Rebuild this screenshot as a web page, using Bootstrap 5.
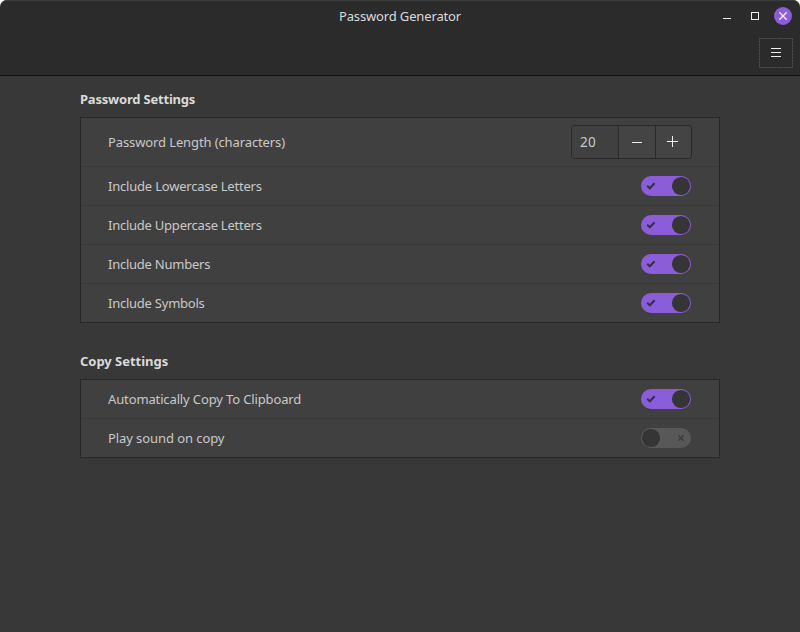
<!DOCTYPE html>
<html lang="en">
<head>
<meta charset="utf-8">
<meta name="viewport" content="width=device-width, initial-scale=1">
<title>Password Generator</title>
<link href="https://cdn.jsdelivr.net/npm/bootstrap@5.3.0/dist/css/bootstrap.min.css" rel="stylesheet">
<style>
  html { background: #fff; }
  body { background: #fff; font-family: "Noto Sans", sans-serif; font-size: 13px; line-height: 18px; color: #c9c9c9; }
  .app-window { height: 632px; background: #383838; border-radius: 7px 7px 0 0; overflow: hidden; }
  .app-header { height: 76px; background: #2b2b2b; border-bottom: 1px solid #101010; border-radius: 7px 7px 0 0; box-shadow: inset 0 1px #3c3c3c; }
  .title-row { height: 32px; }
  .title-text { color: #dadada; letter-spacing: -.14px; }
  .window-buttons { top: 7px; right: 8px; }
  .tool-row { padding: 6px 7px 0 0; }
  .icon-button { background: none; border: 0; padding: 0; line-height: 0; }
  .settings-main { width: 640px; padding-top: 14px; }
  .section-title { font-size: 13px; line-height: 18px; font-weight: 700; color: #dadada; margin-bottom: 9px; }
  .settings-list { --bs-list-group-bg: #404040; --bs-list-group-color: #c9c9c9; --bs-list-group-border-color: #272727; border: 1px solid #272727; border-radius: 0; margin-bottom: 29px; }
  .setting-row { height: 39px; padding: 0 28px 0 27px; border: 0; border-bottom: 1px solid #393939; }
  .setting-row:last-child { height: 38px; border-bottom: 0; }
  .setting-row.tall { height: 49px; padding-right: 27px; }
  .toggle { width: 50px; height: 20px; display: block; }
  .spin { width: 121px; height: 34px; border: 1px solid #292929; border-radius: 3px; background: #444; }
  .spin-value { width: 46px; padding-left: 8px; background: #404040; font-size: 13.5px; letter-spacing: .3px; }
  .spin-step { border-left: 1px solid #292929; }
  .t0 { letter-spacing: -.11px; } .t1 { letter-spacing: -.2px; } .t2 { letter-spacing: -.24px; }
  .t3 { letter-spacing: -.13px; } .t4 { letter-spacing: -.03px; } .t5 { letter-spacing: -.08px; }
</style>
</head>
<body>
<svg class="d-none" xmlns="http://www.w3.org/2000/svg">
  <symbol id="on" viewBox="0 0 50 20">
    <rect width="50" height="20" rx="10" fill="#8c5dd9"/>
    <circle cx="40" cy="10" r="9.1" fill="#353535"/>
    <path d="M6.2 9.8 8.8 12.3 13.6 7.3" fill="none" stroke="#343140" stroke-width="2"/>
  </symbol>
  <symbol id="off" viewBox="0 0 50 20">
    <rect width="50" height="20" rx="10" fill="#585858"/>
    <circle cx="10" cy="10" r="9.1" fill="#353535"/>
    <path d="m37.3 7.3 5.4 5.4m0-5.4-5.4 5.4" fill="none" stroke="#393d45" stroke-width="1.6"/>
  </symbol>
</svg>
<div class="app-window">
  <header class="app-header position-relative">
    <div class="title-row d-flex align-items-center justify-content-center"><span class="title-text">Password Generator</span></div>
    <div class="window-buttons position-absolute d-flex">
      <button class="icon-button" aria-label="Window controls">
        <svg width="70" height="18" viewBox="0 0 70 18"><path d="M1 11h8v1H1z" fill="#eee"/><rect x="29.5" y="5.5" width="7" height="7" fill="none" stroke="#eee"/><circle cx="61" cy="9" r="9" fill="#8c5dd9"/><path d="m57.3 5.3 7.4 7.4m0-7.4-7.4 7.4" stroke="#f2eefa" stroke-width="1.3" fill="none"/></svg>
      </button>
    </div>
    <div class="tool-row d-flex justify-content-end">
      <button class="icon-button" aria-label="Menu">
        <svg width="34" height="30" viewBox="0 0 34 30"><rect x=".5" y=".5" width="33" height="29" fill="none" stroke="#525252" stroke-dasharray="2 1"/><path d="M12 10.5h10M12 14.5h10M12 18.5h10" stroke="#eee"/></svg>
      </button>
    </div>
  </header>
  <main class="settings-main mx-auto">
    <h2 class="section-title t1">Password Settings</h2>
    <div class="list-group settings-list">
      <div class="list-group-item setting-row tall d-flex align-items-center justify-content-between">
        <span class="t0">Password Length (characters)</span>
        <div class="spin d-flex overflow-hidden">
          <span class="spin-value d-flex align-items-center flex-shrink-0">20</span>
          <button class="icon-button spin-step" aria-label="Decrease"><svg width="36" height="32"><path d="M13 16.5h10" stroke="#eee"/></svg></button>
          <button class="icon-button spin-step" aria-label="Increase"><svg width="35" height="32"><path d="M11 15.5h11M16.5 10v11" stroke="#eee"/></svg></button>
        </div>
      </div>
      <div class="list-group-item setting-row d-flex align-items-center justify-content-between"><span class="t1">Include Lowercase Letters</span><svg class="toggle"><use href="#on"/></svg></div>
      <div class="list-group-item setting-row d-flex align-items-center justify-content-between"><span class="t2">Include Uppercase Letters</span><svg class="toggle"><use href="#on"/></svg></div>
      <div class="list-group-item setting-row d-flex align-items-center justify-content-between"><span class="t2">Include Numbers</span><svg class="toggle"><use href="#on"/></svg></div>
      <div class="list-group-item setting-row d-flex align-items-center justify-content-between"><span class="t2">Include Symbols</span><svg class="toggle"><use href="#on"/></svg></div>
    </div>
    <h2 class="section-title t4">Copy Settings</h2>
    <div class="list-group settings-list">
      <div class="list-group-item setting-row d-flex align-items-center justify-content-between"><span class="t3">Automatically Copy To Clipboard</span><svg class="toggle"><use href="#on"/></svg></div>
      <div class="list-group-item setting-row d-flex align-items-center justify-content-between"><span class="t5">Play sound on copy</span><svg class="toggle"><use href="#off"/></svg></div>
    </div>
  </main>
</div>
<script src="https://cdn.jsdelivr.net/npm/bootstrap@5.3.0/dist/js/bootstrap.bundle.min.js"></script>
</body>
</html>
